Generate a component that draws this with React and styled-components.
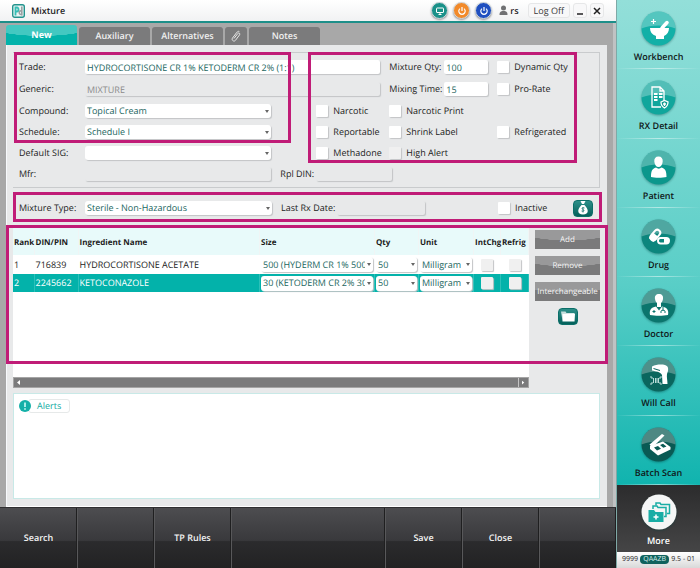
import { useState } from "react";
import styled, { createGlobalStyle, css } from "styled-components";

const GlobalStyle = createGlobalStyle`
  * {
    box-sizing: border-box;
  }

  body {
    margin: 0;
    background: #a8a8a8;
  }

  body,
  button,
  input,
  select {
    font-family: "Open Sans", "Noto Sans", sans-serif;
    font-size: 9px;
    line-height: 12px;
    color: #1c1c1c;
    text-rendering: geometricPrecision;
  }
`;

const Shell = styled.div`
  display: grid;
  grid-template-columns: minmax(0, 1fr) 84px;
  min-height: 100vh;
`;

const Main = styled.div`
  display: flex;
  flex-direction: column;
  background: linear-gradient(270deg, #c0c2c3 3px, #a8a8a8 3px);
`;

const TitleBar = styled.header`
  display: flex;
  align-items: center;
  height: 23px;
  padding: 0 12px;
  border-bottom: 2px solid #1d8f89;
  background: linear-gradient(#ffffff, #f1f2f3);
`;

const Title = styled.h1`
  flex: 1;
  margin: 0 0 0 6px;
  font-size: 9px;
  font-weight: 600;
`;

const StatusButton = styled.button`
  display: flex;
  align-items: center;
  justify-content: center;
  width: 17px;
  height: 17px;
  margin-right: 5px;
  padding: 0;
  border: 1px solid #d3dade;
  border-radius: 50%;
  background: ${(props) => props.$color};
  box-shadow: 0 1px 2px rgba(0, 0, 0, 0.4);
  cursor: pointer;
`;

const User = styled.div`
  display: flex;
  align-items: center;
  gap: 2px;
  margin: 0 9px 0 2px;
  font-weight: 600;
`;

const WindowButton = styled.button`
  min-width: 14px;
  height: 15px;
  margin-left: ${(props) => (props.$wide ? 0 : 3)}px;
  padding: ${(props) => (props.$wide ? "0 5px" : 0)};
  border: 1px solid #e6e7e8;
  border-radius: 3px;
  background: #f8f8f9;
  color: #3a3a3a;
  cursor: pointer;

  svg {
    display: block;
    margin: auto;
  }
`;

const TabBar = styled.div`
  display: flex;
  align-items: flex-end;
  gap: 2px;
  height: 22px;
  padding-left: 6px;
`;

const Tab = styled.button`
  display: flex;
  align-items: center;
  justify-content: center;
  width: ${(props) => (props.$narrow ? 22 : 71)}px;
  height: 18px;
  padding: 0;
  border: none;
  border-radius: 3px 3px 0 0;
  background: #7b7b7c;
  color: #f0f0f0;
  font-weight: 600;
  cursor: pointer;

  ${(props) =>
    props.$active &&
    css`
      height: 20px;
      background:
        radial-gradient(
          ellipse 75% 55% at 50% 0,
          #43c8c1 98%,
          transparent 100%
        ),
        #03b2aa;
      color: #ffffff;
      font-weight: 700;
    `}
`;

const Content = styled.main`
  display: flex;
  flex: 1;
  flex-direction: column;
  margin: 0 9px 0 6px;
  padding: 7px 7px 7px 6px;
  border-left: 1px solid #f7f9fc;
  border-bottom: 1px solid #ffffff;
  background: #e8e9ea;
`;

const FormPanel = styled.section`
  position: relative;
  display: grid;
  grid-template-columns: 66px 187fr 45px 73px 55px 53px 102fr;
  grid-template-rows: 22px 22px repeat(4, 21px);
  align-items: center;
  padding: 3px 0 3px 6px;
  border: 1px solid #c9cbcd;
  border-left-width: 0;
`;

const TypePanel = styled.section`
  position: relative;
  display: grid;
  grid-template-columns: 66px 187fr 65px 161px 102fr;
  align-items: center;
  height: 30px;
  margin: 4px 0 3px;
  padding: 2px 0 0 6px;
`;

const Outline = styled.div`
  position: absolute;
  inset: ${(props) => props.$inset};
  grid-area: ${(props) => props.$area};
  z-index: 2;
  border: 3px solid #c01c77;
  pointer-events: none;
`;

const Label = styled.label`
  grid-column: ${(props) => props.$col};
  grid-row: ${(props) => props.$row};
  padding-left: ${(props) => (props.$pad ? 9 : 0)}px;
  white-space: nowrap;
`;

const Field = styled.input`
  grid-column: ${(props) => props.$col};
  grid-row: ${(props) => props.$row};
  width: ${(props) => props.$width || "auto"};
  min-width: 0;
  height: 14px;
  margin-right: ${(props) => (props.$gap ? 9 : 0)}px;
  padding: 0 2px;
  border: none;
  border-radius: 2px;
  outline: none;
  background: ${(props) => (props.readOnly ? "transparent" : "#ffffff")};
  color: ${(props) => (props.readOnly ? "#8a8a8a" : "#1b6660")};
  box-shadow: 1px 1px 1px #c2c4c6;
`;

const SelectBox = styled.div`
  position: relative;
  grid-column: ${(props) => props.$col};
  grid-row: ${(props) => props.$row};
  height: ${(props) => (props.$cell ? 15 : 14)}px;
  overflow: hidden;
  border-radius: 3px;
  background: #ffffff;
  box-shadow: 1px 1px 1px #c2c4c6;

  &::after {
    content: "";
    position: absolute;
    top: 6px;
    right: 2px;
    border: 2px solid transparent;
    border-top: 3px solid #666666;
    pointer-events: none;
  }

  select {
    display: block;
    width: 100%;
    height: 100%;
    padding: 0 8px 0 2px;
    appearance: none;
    border: none;
    outline: none;
    background: none;
    color: #1b6660;
    text-overflow: clip;
  }
`;

const CheckLabel = styled.label`
  display: flex;
  align-items: center;
  gap: 5px;
  grid-column: ${(props) => props.$col};
  grid-row: ${(props) => props.$row};
  white-space: nowrap;
`;

const CheckBox = styled.input.attrs({ type: "checkbox" })`
  display: block;
  flex: none;
  width: 12px;
  height: 12px;
  margin: 0;
  appearance: none;
  border-radius: 1px;
  background: ${(props) => (props.$muted ? "#f0f0f0" : "#ffffff")};
  box-shadow: 1px 1px 1px #c2c4c6;

  &:checked {
    background: #03b2aa;
  }
`;

const IconButton = styled.button`
  display: flex;
  align-items: center;
  justify-content: center;
  width: 20px;
  height: 17px;
  padding: 0;
  border: 1px solid #0b6f69;
  border-radius: 4px;
  background: linear-gradient(#2d8f89, #04615b);
  cursor: pointer;
`;

const TypeEnd = styled.div`
  display: flex;
  align-items: center;
  justify-content: space-between;
  padding-right: 7px;
`;

const Ingredients = styled.section`
  position: relative;
  display: flex;
  gap: 6px;
  min-height: 163px;
`;

const TablePane = styled.div`
  display: flex;
  flex: 1;
  flex-direction: column;
  min-width: 0;
  background: #ffffff;
`;

const Table = styled.table`
  width: 100%;
  table-layout: fixed;
  border-collapse: collapse;

  th,
  td {
    padding: 0 1px;
    text-align: left;
    white-space: nowrap;
  }

  th {
    height: 30px;
    padding: 6px 0 0 1px;
    border-right: 1px solid #f0f5f5;
    background: #e8fafa;
    font-size: 8px;
    font-weight: 700;
  }
`;

const Col = styled.col`
  width: ${(props) => props.$width};
`;

const Row = styled.tr`
  height: ${(props) => (props.$selected ? 18 : 19)}px;
  background: ${(props) => (props.$selected ? "#03b2aa" : "#ffffff")};
  color: ${(props) => (props.$selected ? "#ffffff" : "#1c1c1c")};

  td {
    border-right: 1px solid
      ${(props) => (props.$selected ? "#2cc0b9" : "#ffffff")};
  }

  ${CheckBox} {
    margin: 0 auto;
  }
`;

const ScrollBar = styled.div`
  display: flex;
  align-items: center;
  justify-content: space-between;
  height: 11px;
  margin-top: auto;
  padding-left: 3px;
  border: 1px solid #a5a5a5;
  background: #7b7b7c;

  svg:last-child {
    width: 10px;
    height: 9px;
    padding: 2px 3px;
    border-left: 1px solid #c4c4c4;
  }
`;

const Actions = styled.div`
  display: flex;
  flex-direction: column;
  align-items: center;
  gap: 7px;
  width: 65px;
  padding-top: 5px;
`;

const ActionButton = styled.button`
  width: 100%;
  height: 19px;
  padding: 0;
  border: none;
  background:
    radial-gradient(ellipse 75% 55% at 50% 0, #99999a 98%, transparent 100%),
    #7a7a7b;
  color: #f4f4f4;
  font-size: 8px;
  white-space: nowrap;
  cursor: pointer;
`;

const Alerts = styled.section`
  flex: 1;
  min-height: 60px;
  margin-top: 5px;
  padding: 5px;
  border: 1px solid #c8e9e7;
  background: #ffffff;
`;

const AlertTag = styled.div`
  display: flex;
  align-items: center;

  svg {
    z-index: 1;
  }

  span {
    margin-left: -3px;
    padding: 0 8px;
    border: 1px solid #e6e9e9;
    border-radius: 3px;
    color: #12aaa2;
  }
`;

const Footer = styled.footer`
  display: grid;
  grid-template-columns: 1fr 1fr 1fr 2fr 1fr 1fr 1fr;
  height: 61px;
  border-top: 1px solid #2f2f31;
  background: linear-gradient(#4d4d50, #39393c 54%, #2b2b2d 56%, #222223);
`;

const FooterButton = styled.button`
  padding: 0;
  border: none;
  border-right: 1px solid #1f1f20;
  border-left: 1px solid #58585a;
  background: none;
  color: #f4f4f4;
  font-weight: 600;
  cursor: pointer;

  &:first-child {
    border-left-color: transparent;
  }
`;

const SideNav = styled.nav`
  display: flex;
  flex-direction: column;
  border-left: 1px solid #7fa9a7;
  background: linear-gradient(#93dfd9, #59cec7 50%, #0fb3ae 86%);
`;

const NavLink = styled.a`
  display: flex;
  flex: 1;
  flex-direction: column;
  align-items: center;
  gap: 5px;
  padding-top: 11px;
  border-bottom: 1px solid;
  border-image: linear-gradient(
      90deg,
      transparent,
      rgba(255, 255, 255, 0.5),
      transparent
    )
    1;
  color: #101818;
  font-weight: 600;
  text-decoration: none;

  svg {
    display: block;
    filter: drop-shadow(0 1px 1px rgba(0, 60, 60, 0.4));
  }

  ${(props) =>
    props.$dark &&
    css`
      flex: none;
      height: 67px;
      padding-top: 9px;
      border: none;
      background: linear-gradient(#2c2c2d, #454546);
      color: #ffffff;
    `}
`;

const Version = styled.div`
  display: flex;
  align-items: center;
  justify-content: space-between;
  height: 16px;
  padding: 0 5px;
  background: linear-gradient(#ffffff, #d9d9d9);
  font-size: 7px;

  b {
    padding: 0 3px;
    border-radius: 4px;
    background: #0f625d;
    color: #d6eeec;
    font-weight: 400;
    line-height: 9px;
  }
`;

const navItems = [
  {
    name: "Workbench",
    color: "#12b0a7",
    shape: (
      <>
        <path d="M9 17h19c0 4-2 6.500-5 8v3h-8v-3c-4-1.500-6-4-6-8z" />
        <path d="M21 17l5-5.500" stroke="#fff" strokeWidth="3.500" strokeLinecap="round" />
        <path d="M12.500 8v5M10 10.500h5" stroke="#fff" strokeWidth="1.200" />
      </>
    ),
  },
  {
    name: "RX Detail",
    color: "#10a69c",
    shape: (
      <g fill="none" stroke="#fff" strokeWidth="1.300">
        <path d="M20 27h-9v-20h8l4 4v10M19 7v4h4" />
        <path d="M13 14h3.500M13 17h3.500M13 20h3.500M18 14h3.500M18 17h3.500" strokeWidth="2" />
        <path d="M20 22l3.500-1.500 3.500 1.500c0 3-1 4.500-3.500 6-2.500-1.500-3.500-3-3.500-6z" fill="#10998f" />
        <path d="M23.500 22.500v3.500M22 24h3" />
      </g>
    ),
  },
  {
    name: "Patient",
    color: "#0b978c",
    shape: (
      <>
        <path d="M17.500 6.500c-3 0-4.500 2-4.200 5 .3 3.500 2 5.500 4.200 5.500s4-2 4.200-5.500c.3-3-1.200-5-4.200-5z" />
        <path d="M10 27c0-6 1-8 5-9.500 1.500 1.500 4 1.500 5.500 0 4 1.500 5 3.500 5 9.500-4 1-12 1-15.500 0z" />
      </>
    ),
  },
  {
    name: "Drug",
    color: "#0c867d",
    shape: (
      <>
        <g transform="rotate(-50 15 16)" fill="none" stroke="#fff" strokeWidth="2">
          <rect x="8.500" y="12.500" width="12" height="6" rx="3" />
          <path d="M9 13.500h5v4h-5z" fill="#fff" />
        </g>
        <rect x="16" y="18" width="13" height="7.500" rx="3.700" />
        <path d="M19.500 20h3.500v3.500h-3.500c-2 0-2-3.500 0-3.500z" fill="#0c867d" />
      </>
    ),
  },
  {
    name: "Doctor",
    color: "#0b756d",
    shape: (
      <>
        <path d="M18 6c-3 0-4.500 2-4 5 .3 2 1 3 2 4v4h4v-4c1-1 1.700-2 2-4 .5-3-1-5-4-5z" />
        <path d="M9 27c-1-5 1-7.500 6-8.500l3 4 3-4c5 1 7 3.500 6 8.500-5 1-13 1-18 0z" />
        <path d="M13 22v3M11.500 23.500h3M22 19v3M20 25v-2c0-1 4-1 4 0v2" fill="none" stroke="#0b756d" />
      </>
    ),
  },
  {
    name: "Will Call",
    color: "#0a665e",
    shape: (
      <>
        <path d="M11 9.500c4-2 9-2.500 13-1.500 3 1 3.500 3 3 6l-1 3c-.5 3 .5 6 .5 10h-5l-.5-9c-2-3.500-6-3.500-10-4.500z" />
        <path d="M12.500 11.500l6.500 2" stroke="#0a665e" />
        <path d="M10 19v2h2M20 19v2h-2M10 28v-2h2M20 28v-2h-2M12.500 21v5M14.500 21v5M16 21v5M17.500 21v5" fill="none" stroke="#b9dcd9" />
      </>
    ),
  },
  {
    name: "Batch Scan",
    color: "#095a54",
    shape: (
      <>
        <path d="M8.500 17.500l12.500-10.500 2.500 1.500-9.500 9.500-3 2.500z" />
        <path d="M9 19l13-4.500 7.500 5.500v2.500l-12.500 6-8-6.500z" />
        <path d="M13 20.500l4-1.500 3 2.700-4 1.800zM19 18l3-1.200 3.500 2.600-3.200 1.400z" fill="#095a54" />
      </>
    ),
  },
];

const footerItems = ["Search", "", "TP Rules", "", "Save", "Close", ""];

const rows = [
  {
    rank: 1,
    din: "716839",
    name: "HYDROCORTISONE ACETATE",
    size: "500 (HYDERM CR 1% 500G)",
  },
  {
    rank: 2,
    din: "2245662",
    name: "KETOCONAZOLE",
    size: "30 (KETODERM CR 2% 30G)",
  },
];

const checks = [
  { name: "Dynamic Qty", col: "7", row: 1 },
  { name: "Pro-Rate", col: "7", row: 2 },
  { name: "Narcotic", col: "4", row: 3 },
  { name: "Narcotic Print", col: "5 / 7", row: 3 },
  { name: "Reportable", col: "4", row: 4 },
  { name: "Shrink Label", col: "5 / 7", row: 4 },
  { name: "Refrigerated", col: "7", row: 4 },
  { name: "Methadone", col: "4", row: 5 },
  { name: "High Alert", col: "5 / 7", row: 5, muted: true },
];

const Select = ({ id, label, value, ...rest }) => (
  <SelectBox {...rest}>
    <select id={id} aria-label={label} defaultValue={value}>
      <option>{value}</option>
    </select>
  </SelectBox>
);

const PowerIcon = () => (
  <svg width="10" height="10" viewBox="0 0 10 10" fill="none" stroke="#fff">
    <path d="M3 2.600a3.200 3.200 0 1 0 4 0M5 1v4" strokeWidth="1.200" />
  </svg>
);

const NavIcon = ({ color, children }) => (
  <svg width="35" height="35" viewBox="0 0 35 35" fill="#fff">
    <circle cx="17.500" cy="17.500" r="17" fill={color} />
    <path
      d="M.5 17.500a17 17 0 0 1 34 0c-9-4-25-4-34 0z"
      fill="#fff"
      fillOpacity=".28"
    />
    {children}
  </svg>
);

const App = () => {
  const [tab, setTab] = useState("New");
  const [selected, setSelected] = useState(2);

  return (
    <Shell>
      <GlobalStyle />
      <Main>
        <TitleBar>
          <svg width="13" height="14" viewBox="0 0 13 14" fill="none">
            <rect x=".7" y=".7" width="11.600" height="12.600" rx="2" fill="#e9f5f4" stroke="#23938d" strokeWidth="1.400" />
            <path d="M3.500 11.500V3.500h1.500c2 0 2 4 0 4h-1" stroke="#35bdb5" strokeWidth="1.800" />
            <path d="M9.800 2.500v9M9.500 7c-3-1-3 4 0 3.500" stroke="#9a9fa2" strokeWidth="1.600" />
          </svg>
          <Title>Mixture</Title>
          <StatusButton $color="#1a9189" aria-label="Workstation">
            <svg width="10" height="10" viewBox="0 0 10 10" fill="none" stroke="#fff">
              <rect x="1.500" y="2" width="7" height="4.500" rx=".5" />
              <path d="M3.500 8.500h3M5 6.500v2" />
            </svg>
          </StatusButton>
          <StatusButton $color="#f28a2a" aria-label="Restart">
            <PowerIcon />
          </StatusButton>
          <StatusButton $color="#1f4fc0" aria-label="Shut down">
            <PowerIcon />
          </StatusButton>
          <User>
            <svg width="9" height="11" viewBox="0 0 9 11" fill="#707173">
              <circle cx="4.500" cy="3" r="2.500" />
              <path d="M.5 10c0-3 1-4 4-4s4 1 4 4z" />
            </svg>
            rs
          </User>
          <WindowButton $wide>Log Off</WindowButton>
          <WindowButton aria-label="Minimize">
            <svg width="8" height="8" stroke="#222" strokeWidth="1.500">
              <path d="M1 7h6" />
            </svg>
          </WindowButton>
          <WindowButton aria-label="Close window">
            <svg width="8" height="8" stroke="#222" strokeWidth="1.500">
              <path d="M1 1l6 6M7 1l-6 6" />
            </svg>
          </WindowButton>
        </TitleBar>

        <TabBar>
          {["New", "Auxiliary", "Alternatives", "Attachments", "Notes"].map(
            (name) => (
              <Tab
                key={name}
                $active={tab === name}
                $narrow={name === "Attachments"}
                aria-label={name}
                onClick={() => setTab(name)}
              >
                {name === "Attachments" ? (
                  <svg width="10" height="12" viewBox="0 0 10 12" fill="none" stroke="#e6e6e6">
                    <path d="M3 8.500l3.800-5c1-1.200 2.700 0 1.800 1.300l-4.200 5.600c-1.400 1.700-4.200-.2-3-2.200l4-5.300C6.500 1.500 7.500 1 8.300 1.500" />
                  </svg>
                ) : (
                  name
                )}
              </Tab>
            )
          )}
        </TabBar>

        <Content>
          <FormPanel>
            <Label htmlFor="trade" $col="1" $row={1}>
              Trade:
            </Label>
            <Field
              id="trade"
              defaultValue="HYDROCORTISONE CR 1% KETODERM CR 2% (1:1)"
              $col="2 / 5"
              $row={1}
              $gap
            />
            <Label htmlFor="generic" $col="1" $row={2}>
              Generic:
            </Label>
            <Field id="generic" value="MIXTURE" readOnly $col="2 / 5" $row={2} $gap />
            <Label htmlFor="compound" $col="1" $row={3}>
              Compound:
            </Label>
            <Select id="compound" value="Topical Cream" $col="2" $row={3} />
            <Label htmlFor="schedule" $col="1" $row={4}>
              Schedule:
            </Label>
            <Select id="schedule" value="Schedule I" $col="2" $row={4} />
            <Label htmlFor="sig" $col="1" $row={5}>
              Default SIG:
            </Label>
            <Select id="sig" value="" $col="2" $row={5} />
            <Label htmlFor="mfr" $col="1" $row={6}>
              Mfr:
            </Label>
            <Field id="mfr" readOnly $col="2" $row={6} />
            <Label htmlFor="rpl" $col="3" $row={6} $pad>
              Rpl DIN:
            </Label>
            <Field id="rpl" readOnly $col="4" $row={6} $width="76px" />
            <Label htmlFor="qty" $col="5" $row={1}>
              Mixture Qty:
            </Label>
            <Field id="qty" defaultValue="100" $col="6" $row={1} $gap />
            <Label htmlFor="time" $col="5" $row={2}>
              Mixing Time:
            </Label>
            <Field id="time" defaultValue="15" $col="6" $row={2} $gap />
            {checks.map((check) => (
              <CheckLabel key={check.name} $col={check.col} $row={check.row}>
                <CheckBox $muted={check.muted} />
                {check.name}
              </CheckLabel>
            ))}
            <Outline $area="1 / 1 / 5 / 3" $inset="-4px -20px -1px -5px" />
            <Outline $area="1 / 4 / 6 / 8" $inset="-4px 22px 0 -8px" />
          </FormPanel>

          <TypePanel>
            <Label htmlFor="type">Mixture Type:</Label>
            <Select id="type" value="Sterile - Non-Hazardous" />
            <Label htmlFor="last" $pad>
              Last Rx Date:
            </Label>
            <Field id="last" readOnly $width="88px" />
            <TypeEnd>
              <CheckLabel>
                <CheckBox />
                Inactive
              </CheckLabel>
              <IconButton aria-label="Pricing">
                <svg width="12" height="14" viewBox="0 0 12 14" fill="#fff">
                  <path d="M3.500 0h5l-1.500 3h-2zM4.500 4h3c5 5 4 9.500-1.500 9.500s-6.500-4.500-1.500-9.500z" />
                  <path d="M7.500 7c-3-1-3 1-1.500 1.500s1.500 2.500-1.500 1.500M6 6v5.500" fill="none" stroke="#1a756f" strokeWidth=".8" />
                </svg>
              </IconButton>
            </TypeEnd>
            <Outline $inset="0 -2px 0 0" />
          </TypePanel>

          <Ingredients>
            <TablePane>
              <Table>
                <colgroup>
                  <Col $width="21px" />
                  <Col $width="44px" />
                  <Col />
                  <Col $width="115px" />
                  <Col $width="44px" />
                  <Col $width="55px" />
                  <Col $width="27px" />
                  <Col $width="28px" />
                </colgroup>
                <thead>
                  <tr>
                    <th>Rank</th>
                    <th>DIN/PIN</th>
                    <th>Ingredient Name</th>
                    <th>Size</th>
                    <th>Qty</th>
                    <th>Unit</th>
                    <th>IntChg</th>
                    <th>Refrig</th>
                  </tr>
                </thead>
                <tbody>
                  {rows.map((row) => (
                    <Row
                      key={row.rank}
                      $selected={row.rank === selected}
                      onClick={() => setSelected(row.rank)}
                    >
                      <td>{row.rank}</td>
                      <td>{row.din}</td>
                      <td>{row.name}</td>
                      <td>
                        <Select label={`Size ${row.rank}`} value={row.size} $cell />
                      </td>
                      <td>
                        <Select label={`Qty ${row.rank}`} value="50" $cell />
                      </td>
                      <td>
                        <Select label={`Unit ${row.rank}`} value="Milligram" $cell />
                      </td>
                      <td>
                        <CheckBox $muted aria-label={`IntChg ${row.rank}`} />
                      </td>
                      <td>
                        <CheckBox $muted aria-label={`Refrig ${row.rank}`} />
                      </td>
                    </Row>
                  ))}
                </tbody>
              </Table>
              <ScrollBar>
                <svg width="4" height="5" viewBox="0 0 4 5" fill="#fff">
                  <path d="M3 0v5l-3-2.500z" />
                </svg>
                <svg viewBox="0 0 4 5" fill="#fff">
                  <path d="M0 0v5l3-2.500z" />
                </svg>
              </ScrollBar>
            </TablePane>
            <Actions>
              <ActionButton>Add</ActionButton>
              <ActionButton>Remove</ActionButton>
              <ActionButton>Interchangeable</ActionButton>
              <IconButton aria-label="Open folder">
                <svg width="16" height="13" viewBox="0 0 16 13" fill="#fff">
                  <path d="M1 1.500h4.500l1 1.500h7.500v1.500H3L2.500 11z" fill="#c5dfdd" />
                  <path d="M2.500 4l12.500-.5-.5 8h-12z" />
                </svg>
              </IconButton>
            </Actions>
            <Outline $inset="0 -8px 24px -7px" />
          </Ingredients>

          <Alerts>
            <AlertTag>
              <svg width="12" height="12" viewBox="0 0 12 12">
                <circle cx="6" cy="6" r="6" fill="#14b0a8" />
                <path d="M6 2.500v4.500M6 8.200v1.500" stroke="#d9fffc" strokeWidth="1.500" />
              </svg>
              <span>Alerts</span>
            </AlertTag>
          </Alerts>
        </Content>

        <Footer>
          {footerItems.map((item, i) => (
            <FooterButton key={i}>{item}</FooterButton>
          ))}
        </Footer>
      </Main>

      <SideNav>
        {navItems.map((item) => (
          <NavLink key={item.name} href="#">
            <NavIcon color={item.color}>{item.shape}</NavIcon>
            {item.name}
          </NavLink>
        ))}
        <NavLink href="#" $dark>
          <svg width="36" height="36" viewBox="0 0 36 36">
            <circle cx="18" cy="18" r="17.500" fill="#f5f6f6" />
            <g fill="none" stroke="#18ada5" strokeWidth="1.500">
              <path d="M12 15v-3h4l1 1.500h8v9h-2" />
              <path d="M15 11.500v-2.500h4l1 1.500h8.500v9h-2.500" />
            </g>
            <path d="M7.500 16h5.500l1.500 2h8v10h-15z" fill="#18ada5" />
            <path d="M15 20.500v5M12.500 23h5" stroke="#fff" strokeWidth="1.500" />
          </svg>
          More
        </NavLink>
        <Version>
          <span>9999</span>
          <b>QAAZB</b>
          <span>9.5 - 01</span>
        </Version>
      </SideNav>
    </Shell>
  );
};

export default App;
